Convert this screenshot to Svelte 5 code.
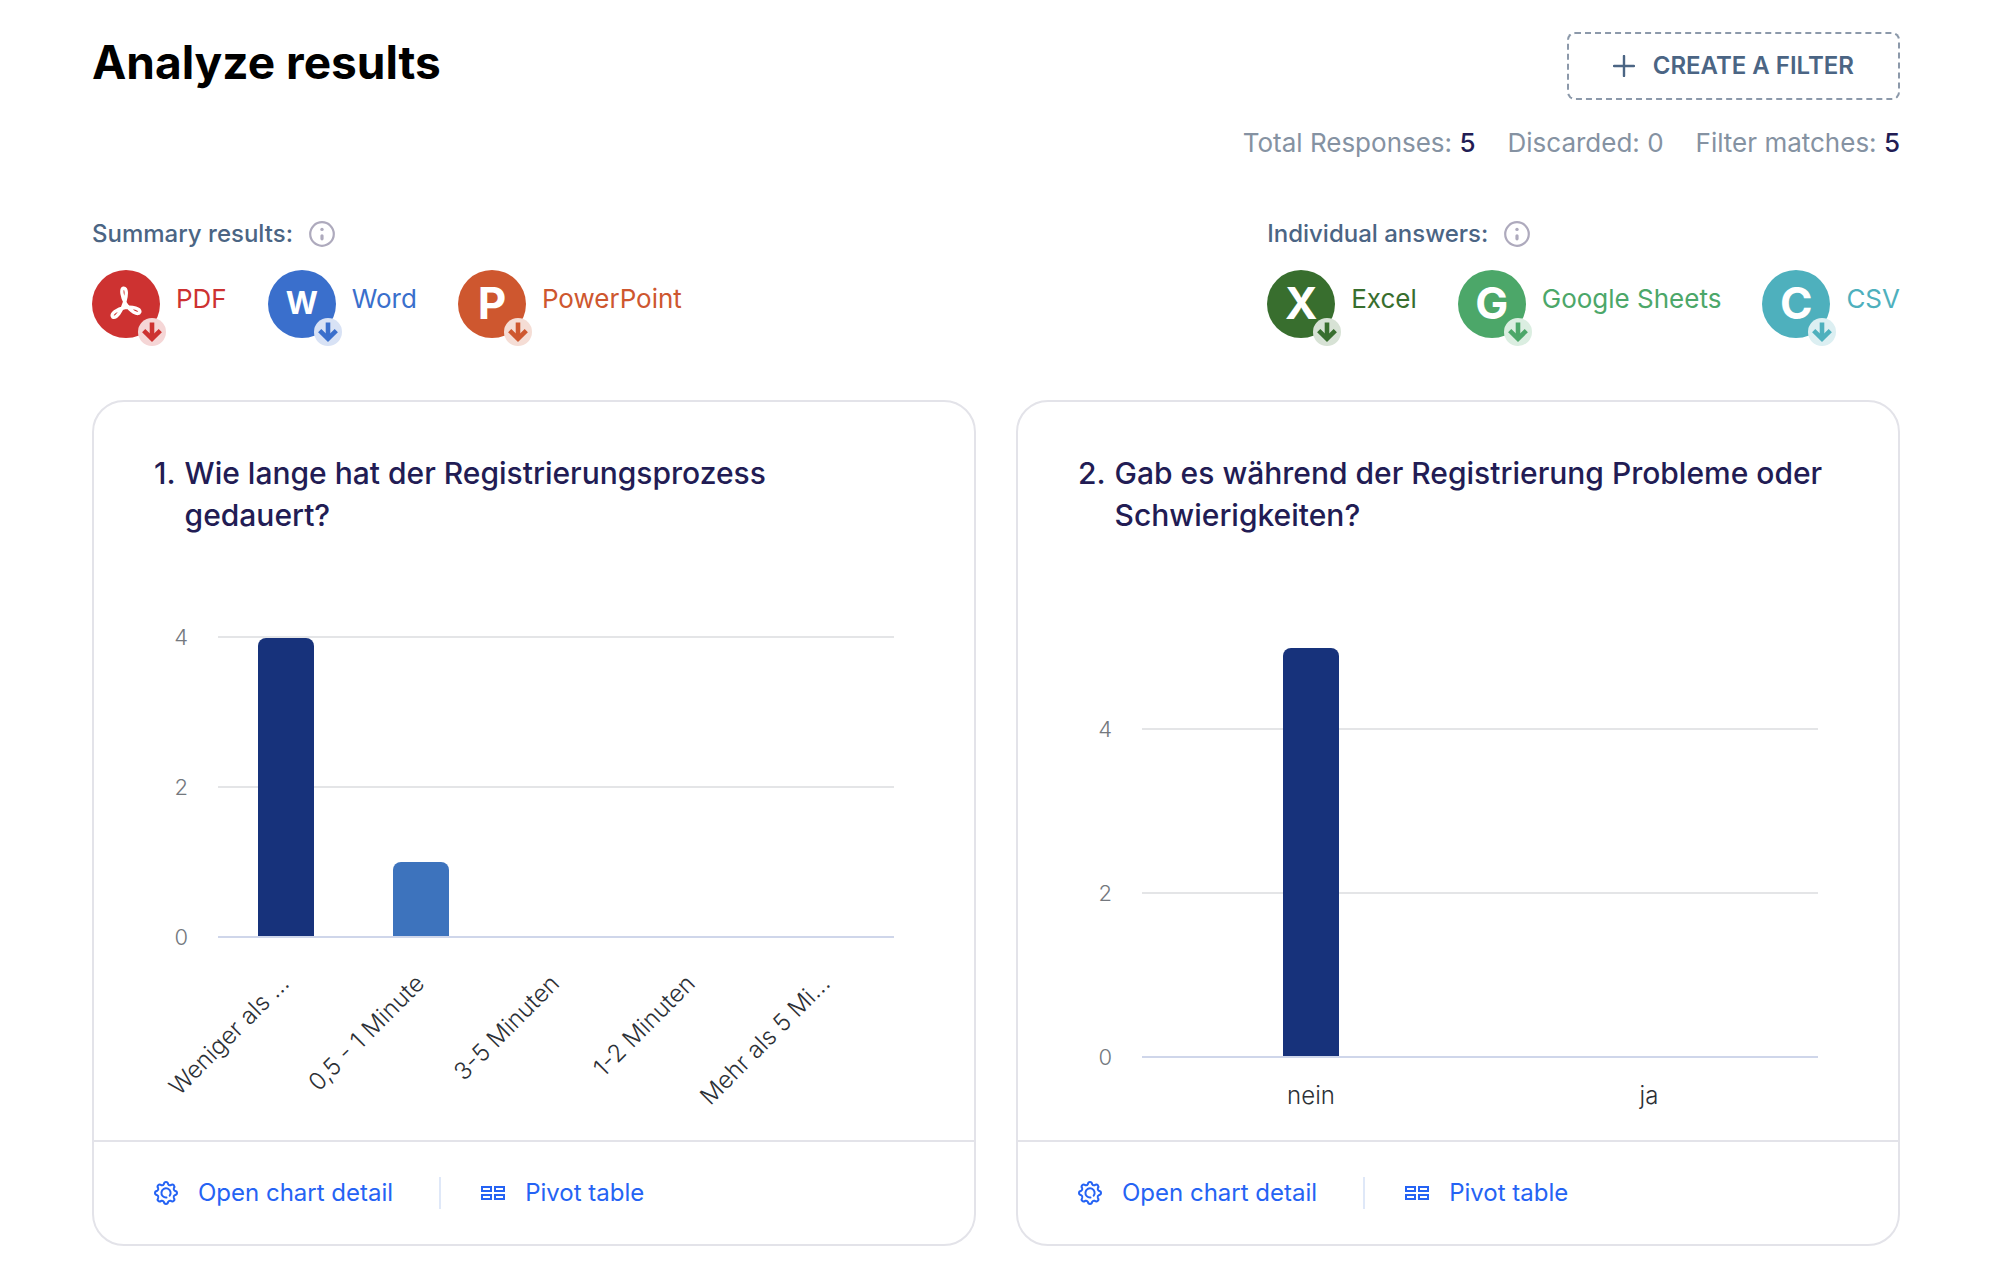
<script lang="ts">
  type Format = { name: string; kind: string; letter?: string; size?: string };

  const summary: Format[] = [
    { name: 'PDF', kind: 'pdf' },
    { name: 'Word', kind: 'word', letter: 'W', size: 'small' },
    { name: 'PowerPoint', kind: 'powerpoint', letter: 'P' }
  ];
  const individual: Format[] = [
    { name: 'Excel', kind: 'excel', letter: 'X' },
    { name: 'Google Sheets', kind: 'sheets', letter: 'G' },
    { name: 'CSV', kind: 'csv', letter: 'C' }
  ];
  const groups = [
    { title: 'Summary results:', formats: summary },
    { title: 'Individual answers:', formats: individual }
  ];

  const charts = [
    {
      title: 'Wie lange hat der Registrierungsprozess gedauert?',
      max: 4,
      slanted: true,
      bars: [
        { label: 'Weniger als ...', value: 4 },
        { label: '0,5 - 1 Minute', value: 1 },
        { label: '3-5 Minuten', value: 0 },
        { label: '1-2 Minuten', value: 0 },
        { label: 'Mehr als 5 Mi...', value: 0 }
      ]
    },
    {
      title: 'Gab es während der Registrierung Probleme oder Schwierigkeiten?',
      max: 5,
      slanted: false,
      bars: [
        { label: 'nein', value: 5 },
        { label: 'ja', value: 0 }
      ]
    }
  ];
  const ticks = [4, 2, 0];
</script>

<main>
  <header>
    <h1>Analyze results</h1>
    <div class="tools">
      <button class="filter" type="button">
        <svg width="22" height="22" viewBox="0 0 22 22" aria-hidden="true">
          <path d="M11 1v20M1 11h20" stroke="currentColor" stroke-width="2.4" stroke-linecap="round" />
        </svg>
        <span>CREATE A FILTER</span>
      </button>
      <div class="stats">
        <span>Total Responses: <b>5</b></span>
        <span>Discarded: 0</span>
        <span>Filter matches: <b>5</b></span>
      </div>
    </div>
  </header>

  <div class="exports">
    {#each groups as group}
      <section>
        <div class="group-title">
          <span>{group.title}</span>
          <svg width="26" height="26" viewBox="0 0 26 26" aria-hidden="true">
            <circle cx="13" cy="13" r="11.8" fill="none" stroke="#aeaabd" stroke-width="2.2" />
            <circle cx="13" cy="8.4" r="1.7" fill="#aeaabd" />
            <path d="M13 14.8v3" stroke="#aeaabd" stroke-width="3.2" stroke-linecap="round" />
          </svg>
        </div>
        <div class="formats">
          {#each group.formats as format}
            <a class="format {format.kind}" href="#{format.kind}">
              <span class="disc {format.size ?? ''}">
                {#if format.letter}
                  {format.letter}
                {:else}
                  <svg width="32" height="34" viewBox="0 0 32 34" fill="none" stroke="#fff" stroke-width="3.4" stroke-linejoin="round" aria-hidden="true">
                    <path d="M15.500 17.500C12 11 10.500 3 13.500 2.200C17 1.800 16.800 9 15 15C12.500 24 6 33 2.800 31C0 28 7 23 15 21.500C23 20.500 30.500 22.500 29.800 26C28.500 30 20 25.500 15.500 17.500Z" />
                  </svg>
                {/if}
                <span class="badge">
                  <svg width="20" height="20" viewBox="0 0 20 20" fill="none" stroke="currentColor" aria-hidden="true">
                    <path d="M10 0.500V16" stroke-width="4.600" />
                    <path d="M1.700 8.700L10 16.700L18.300 8.700" stroke-width="4.600" />
                  </svg>
                </span>
              </span>
              <span class="name">{format.name}</span>
            </a>
          {/each}
        </div>
      </section>
    {/each}
  </div>

  <div class="cards">
    {#each charts as chart, i}
      <article>
        <h2><span>{i + 1}.</span><span>{chart.title}</span></h2>
        <div class="chart" class:tall={!chart.slanted}>
          <div class="plot">
            {#each ticks as tick}
              <div class="tick" class:base={tick === 0} style:bottom="{(tick / chart.max) * 100}%">
                <span>{tick}</span>
              </div>
            {/each}
            <div class="bars">
              {#each chart.bars as bar, n}
                <div class="slot">
                  {#if bar.value > 0}
                    <div class="bar" class:second={n === 1} style:height="{(bar.value / chart.max) * 100}%"></div>
                  {/if}
                </div>
              {/each}
            </div>
          </div>
          <div class="labels" class:slanted={chart.slanted}>
            {#each chart.bars as bar}
              <div class="label"><span>{bar.label}</span></div>
            {/each}
          </div>
        </div>
        <footer>
          <a href="#detail-{i + 1}">
            <svg width="24" height="24" viewBox="0 0 24 24" fill="none" stroke="currentColor" stroke-width="2" stroke-linejoin="round" stroke-linecap="round" aria-hidden="true">
              <path d="M9.800 3.200Q10.200 1 12 1T14.200 3.200Q15 4.700 16.700 4.200Q18.600 2.900 19.800 4.200T19.800 7.300Q19.300 9 20.800 9.800Q23 10.200 23 12T20.800 14.200Q19.300 15 19.800 16.700Q21.100 18.600 19.800 19.800T16.700 19.800Q15 19.300 14.200 20.800Q13.800 23 12 23T9.800 20.800Q9 19.300 7.300 19.800Q5.400 21.100 4.200 19.800T4.200 16.700Q4.700 15 3.200 14.200Q1 13.800 1 12T3.200 9.800Q4.700 9 4.200 7.300Q2.900 5.400 4.200 4.200T7.300 4.200Q9 4.700 9.800 3.200Z" />
              <path d="M12.500 16.500A4.600 4.600 0 1 1 15.700 14.700" />
            </svg>
            <span>Open chart detail</span>
          </a>
          <a href="#pivot-{i + 1}">
            <svg width="24" height="14" viewBox="0 0 24 14" fill="none" stroke="currentColor" stroke-width="2" aria-hidden="true">
              <path d="M1 1h9v4h-9zM14 1h9v4h-9zM1 9h9v4h-9zM14 9h9v4h-9z" />
            </svg>
            <span>Pivot table</span>
          </a>
        </footer>
      </article>
    {/each}
  </div>
</main>

<style>
  :global(body) {
    margin: 0;
    background: #fff;
  }
  main {
    font-family: Inter, 'Liberation Sans', sans-serif;
    padding: 32px 90px 18px 92px;
  }
  h1,
  h2 {
    margin: 0;
  }
  a {
    color: inherit;
    text-decoration: none;
  }
  header {
    display: flex;
    justify-content: space-between;
    align-items: flex-start;
  }
  h1 {
    font-size: 46px;
    line-height: 60px;
    font-weight: 700;
    color: #000;
  }
  .tools {
    display: flex;
    flex-direction: column;
    align-items: flex-end;
    gap: 26px;
  }
  .filter {
    display: flex;
    align-items: center;
    gap: 18px;
    height: 68px;
    padding: 0 44px;
    border: 2px dashed #8c99aa;
    border-radius: 8px;
    background: none;
    color: #4b6584;
    font: 600 24px/32px Inter, 'Liberation Sans', sans-serif;
  }
  .stats {
    display: flex;
    gap: 32px;
    font-size: 26px;
    line-height: 34px;
    font-weight: 400;
    color: #8592a2;
  }
  .stats b {
    font-weight: 500;
    color: #221c54;
  }
  .exports {
    display: flex;
    justify-content: space-between;
    padding-top: 58px;
  }
  .group-title {
    display: flex;
    align-items: center;
    gap: 16px;
    font-size: 24px;
    line-height: 32px;
    font-weight: 500;
    color: #4b6584;
  }
  .formats {
    display: flex;
    gap: 41px;
    padding-top: 20px;
  }
  .format {
    display: flex;
    gap: 16px;
    font-size: 26px;
    line-height: 58px;
    color: var(--tone);
  }
  .disc {
    position: relative;
    box-sizing: border-box;
    display: flex;
    align-items: center;
    justify-content: center;
    width: 68px;
    height: 68px;
    padding-bottom: 2px;
    border-radius: 50%;
    background: var(--tone);
    color: #fff;
    font-size: 44px;
    font-weight: 700;
    line-height: 66px;
  }
  .disc.small {
    font-size: 31px;
  }
  .badge {
    position: absolute;
    right: -6px;
    bottom: -8px;
    display: flex;
    align-items: center;
    justify-content: center;
    width: 28px;
    height: 28px;
    border-radius: 50%;
    background: var(--pale);
    color: var(--tone);
  }
  .pdf { --tone: #cd3231; --pale: #f5d6d6; }
  .word { --tone: #3a6fcc; --pale: #d8e2f5; }
  .powerpoint { --tone: #ce572f; --pale: #f5ddd5; }
  .excel { --tone: #386e2e; --pale: #d7e2d5; }
  .sheets { --tone: #4ca769; --pale: #dbeee1; }
  .csv { --tone: #4eb0bd; --pale: #dceff2; }

  .cards {
    display: grid;
    grid-template-columns: repeat(2, minmax(0, 1fr));
    gap: 40px;
    padding-top: 62px;
  }
  article {
    display: flex;
    flex-direction: column;
    border: 2px solid #e3e3e9;
    border-radius: 32px;
  }
  h2 {
    display: flex;
    gap: 9px;
    padding: 50px 60px 0;
    font-size: 30px;
    line-height: 42px;
    font-weight: 500;
    color: #221c54;
  }
  .chart {
    display: flex;
    flex-direction: column;
    padding: 102px 80px 0 124px;
  }
  .chart.tall {
    padding-top: 112px;
  }
  .plot {
    position: relative;
    height: 300px;
  }
  .tall .plot {
    height: 410px;
  }
  .tick {
    position: absolute;
    left: 0;
    right: 0;
    height: 2px;
    background: #e4e5e7;
  }
  .tick.base {
    background: #cfd6ea;
  }
  .tick span {
    position: absolute;
    right: 100%;
    top: -14px;
    margin-right: 30px;
    font-size: 22px;
    line-height: 30px;
    font-weight: 300;
    color: #74787e;
  }
  .bars {
    position: absolute;
    inset: 0 0 2px;
    display: flex;
  }
  .slot {
    flex: 1;
    display: flex;
    align-items: flex-end;
    justify-content: center;
  }
  .bar {
    width: 56px;
    border-radius: 8px 8px 0 0;
    background: #17327b;
  }
  .bar.second {
    background: #3d73bd;
  }
  .labels {
    display: grid;
    grid-auto-flow: column;
    grid-auto-columns: minmax(0, 1fr);
    height: 60px;
    padding-top: 22px;
    font-size: 24px;
    line-height: 32px;
    font-weight: 300;
    color: #2c3036;
  }
  .label {
    text-align: center;
  }
  .labels.slanted {
    height: 172px;
    padding-top: 30px;
  }
  .slanted .label {
    display: grid;
    grid-template-columns: repeat(2, minmax(0, 1fr));
    align-items: start;
  }
  .slanted span {
    justify-self: end;
    margin-right: 12px;
    white-space: nowrap;
    transform: rotate(-45deg);
    transform-origin: right top;
  }
  footer {
    display: flex;
    align-items: center;
    margin-top: auto;
    height: 102px;
    padding: 0 60px;
    border-top: 2px solid #e3e3e9;
    font-size: 24px;
    line-height: 32px;
    color: #2563f4;
  }
  footer a {
    display: flex;
    align-items: center;
    gap: 20px;
  }
  footer a + a {
    margin-left: 46px;
    padding-left: 40px;
    border-left: 2px solid #dfe8f8;
  }
</style>
